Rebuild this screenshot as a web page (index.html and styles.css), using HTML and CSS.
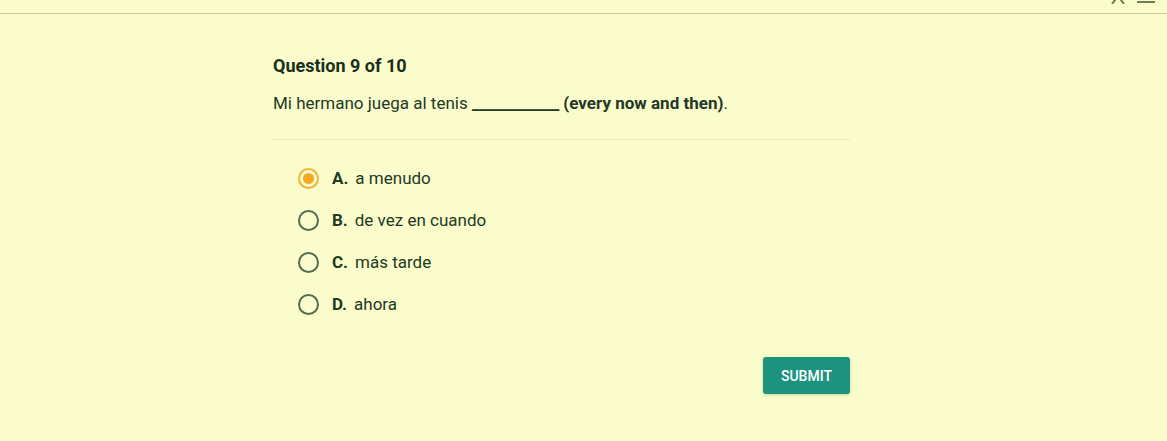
FILE: index.html
```html
<!DOCTYPE html>
<html lang="es">
<head>
<meta charset="utf-8">
<title>Question 9 of 10</title>
<link rel="stylesheet" href="styles.css">
</head>
<body>
<header class="topbar">
  <div class="top-icons">
    <svg class="ic-caret" width="16" height="8" viewBox="0 0 16 8"><path d="M2 8 L8 0 L14 8" fill="none" stroke="#6d7a5c" stroke-width="2"/></svg>
    <span class="ic-bar"></span>
  </div>
</header>
<main class="quiz">
  <h1 class="q-title">Question 9 of 10</h1>
  <p class="q-text">Mi hermano juega al tenis <span class="blank">____________</span> <b>(every now and then)</b>.</p>
  <hr class="sep">
  <ul class="options">
    <li class="opt selected"><span class="radio"></span><b class="letter">A.</b><span>a menudo</span></li>
    <li class="opt"><span class="radio"></span><b class="letter">B.</b><span>de vez en cuando</span></li>
    <li class="opt"><span class="radio"></span><b class="letter">C.</b><span>más tarde</span></li>
    <li class="opt"><span class="radio"></span><b class="letter">D.</b><span>ahora</span></li>
  </ul>
  <div class="actions"><button class="submit">SUBMIT</button></div>
</main>
</body>
</html>
```
FILE: styles.css
```css
html, body { margin: 0; padding: 0; }
body {
  background: #fafdcb;
  font-family: Roboto, "Liberation Sans", sans-serif;
  color: #1f3322;
  height: 441px;
  overflow: hidden;
}
.topbar {
  height: 13px;
  border-bottom: 1px solid #c9cc98;
  display: flex;
  justify-content: flex-end;
  align-items: flex-start;
  overflow: hidden;
}
.top-icons {
  display: flex;
  align-items: flex-start;
  gap: 11px;
  margin-right: 12px;
}
.ic-caret { margin-top: -4px; }
.ic-bar {
  display: block;
  width: 18px;
  height: 2px;
  margin-top: 1px;
  background: #6d7a5c;
}
.quiz {
  width: 577px;
  margin: 0 0 0 273px;
  padding-top: 41px;
}
.q-title {
  font-size: 18px;
  font-weight: 700;
  margin: 0;
  line-height: 22px;
  color: #1b2e1d;
}
.q-text {
  font-size: 17px;
  margin: 15px 0 0;
  line-height: 22px;
  color: #233826;
}
.q-text b { font-weight: 700; }
.blank { font-weight: 700; letter-spacing: -0.3px; }
.sep {
  border: 0;
  border-top: 1px solid #e8ebb8;
  margin: 25px 0 0;
}
.options {
  list-style: none;
  margin: 0;
  padding: 27px 0 0 25px;
  display: flex;
  flex-direction: column;
  gap: 20px;
}
.opt {
  display: flex;
  align-items: center;
  height: 22px;
  font-size: 17px;
  color: #233826;
}
.radio {
  width: 17px;
  height: 17px;
  border: 2px solid #566b55;
  border-radius: 50%;
  box-sizing: content-box;
  margin-right: 13px;
  display: flex;
  align-items: center;
  justify-content: center;
}
.opt.selected .radio { border-color: #f0b43a; }
.opt.selected .radio::after {
  content: "";
  width: 11px;
  height: 11px;
  border-radius: 50%;
  background: #f5a623;
}
.letter { font-weight: 700; margin-right: 7px; }
.actions {
  display: flex;
  justify-content: flex-end;
  margin-top: 42px;
}
.submit {
  background: #1d937f;
  color: #ffffff;
  border: 0;
  border-radius: 3px;
  font-family: Roboto, "Liberation Sans", sans-serif;
  font-size: 14px;
  font-weight: 500;
  width: 87px;
  height: 37px;
  box-shadow: 0 1px 3px rgba(0,0,0,0.2);
}
```
